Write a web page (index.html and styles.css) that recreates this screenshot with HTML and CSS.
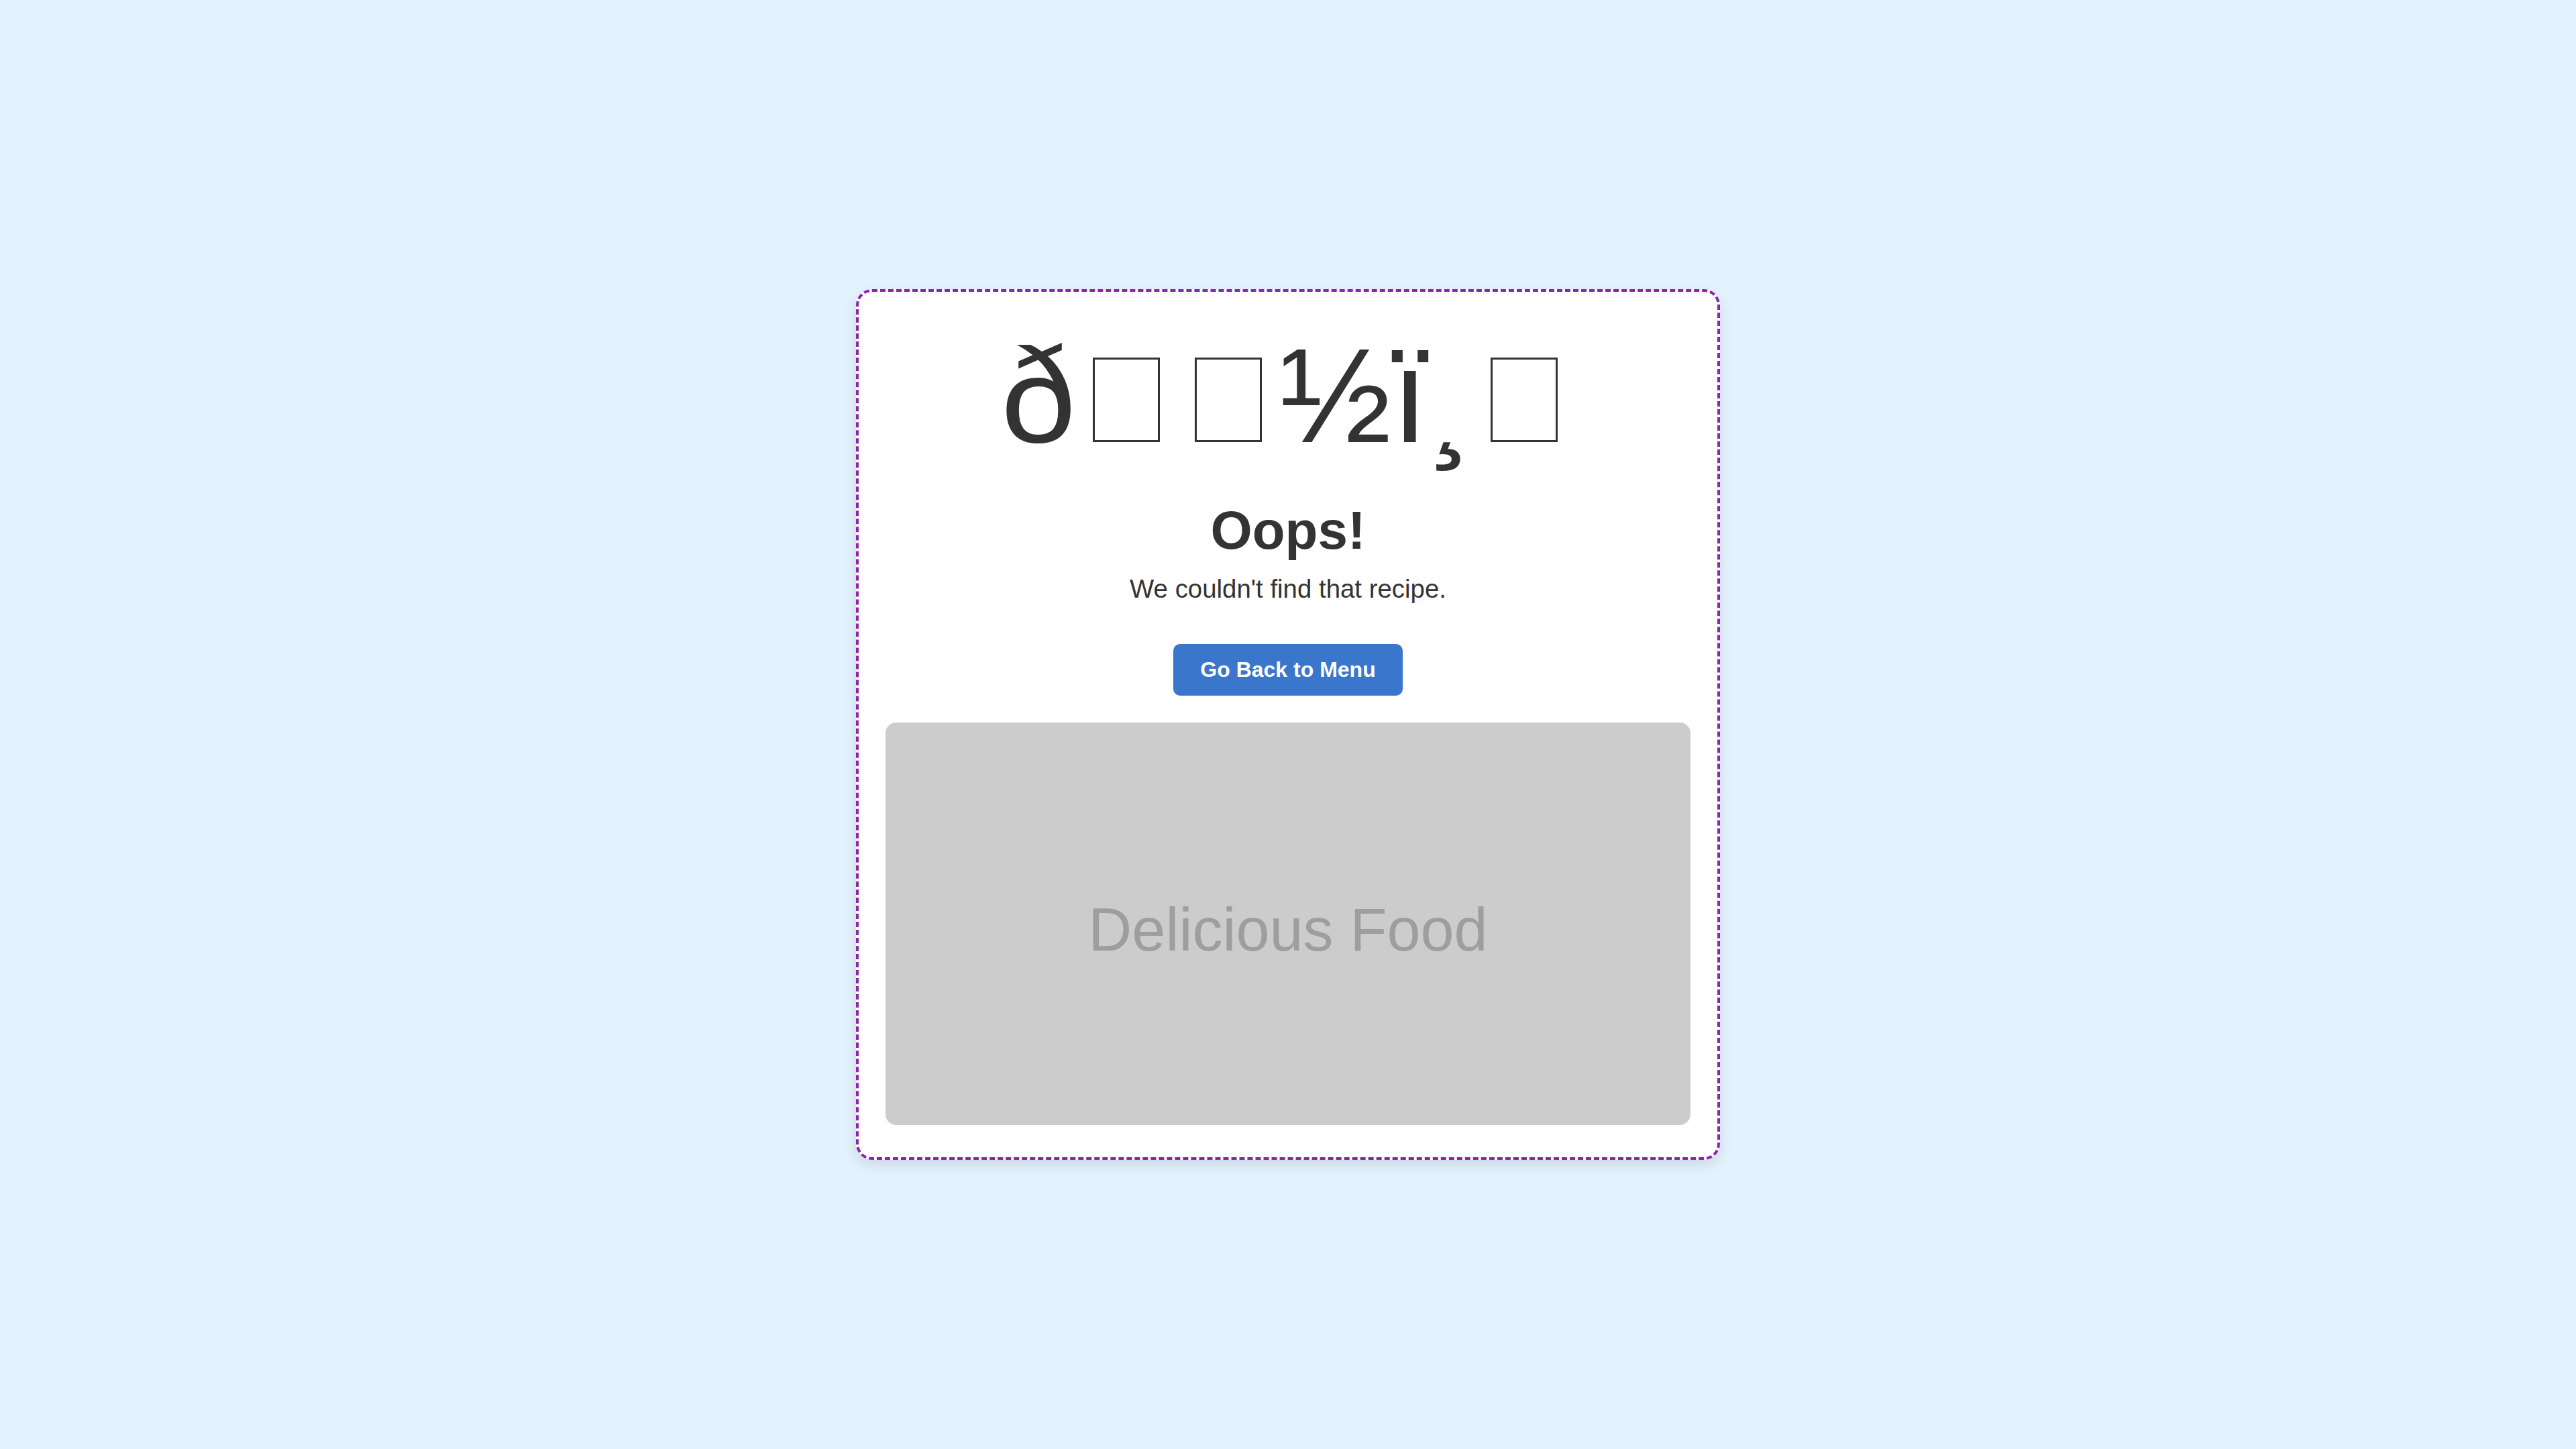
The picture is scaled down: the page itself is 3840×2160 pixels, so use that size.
FILE: index.html
```html
<!DOCTYPE html>
<html lang="en">
<head>
<meta charset="utf-8">
<title>Recipe not found</title>
<link rel="stylesheet" href="styles.css">
</head>
<body>
<main class="card">
  <div class="emoji">ð<span class="tofu"></span><span class="tofu">&#x8D;</span>½ï¸<span class="tofu">&#x8F;</span></div>
  <h1 class="title">Oops!</h1>
  <p class="message">We couldn't find that recipe.</p>
  <div class="actions"><a class="btn" href="#">Go Back to Menu</a></div>
  <div class="photo"><span class="photo-label">Delicious Food</span></div>
</main>
</body>
</html>
```
FILE: styles.css
```css
html, body {
  margin: 0;
  padding: 0;
}
body {
  min-height: 100vh;
  display: flex;
  align-items: center;
  justify-content: center;
  background: #e3f2fd;
  font-family: "Liberation Sans", Arial, sans-serif;
  color: #333;
}
.card {
  width: 1200px;
  padding: 40px;
  background: #fff;
  border: 4px dashed #8e24aa;
  border-radius: 24px;
  box-shadow: 0 8px 20px rgba(0, 0, 0, 0.1);
  text-align: center;
}
.emoji {
  font-size: 200px;
  line-height: 230px;
  height: 230px;
  margin: 0 0 40px;
  white-space: nowrap;
}
.tofu {
  display: inline-block;
  box-sizing: border-box;
  width: 100px;
  height: 126px;
  margin: 0 26px;
  border: 3px solid #333;
  overflow: hidden;
  font-size: 10px;
  line-height: 10px;
  vertical-align: baseline;
}
.title {
  font-size: 80px;
  font-weight: bold;
  line-height: normal;
  margin: 0 0 19px;
}
.message {
  font-size: 38.4px;
  line-height: normal;
  margin: 0 0 60px;
}
.actions {
  display: flex;
  justify-content: center;
  margin: 0 0 40px;
}
.btn {
  display: block;
  padding: 20px 40px;
  background: #3a76cc;
  color: #fff;
  font-weight: bold;
  font-size: 32px;
  line-height: normal;
  border-radius: 10px;
  text-decoration: none;
}
.photo {
  height: 600px;
  margin-bottom: 8px;
  background: #ccc;
  border-radius: 16px;
  display: flex;
  align-items: center;
  justify-content: center;
  color: #9e9e9e;
  font-size: 90px;
}
.photo-label {
  padding-top: 18px;
}
```
